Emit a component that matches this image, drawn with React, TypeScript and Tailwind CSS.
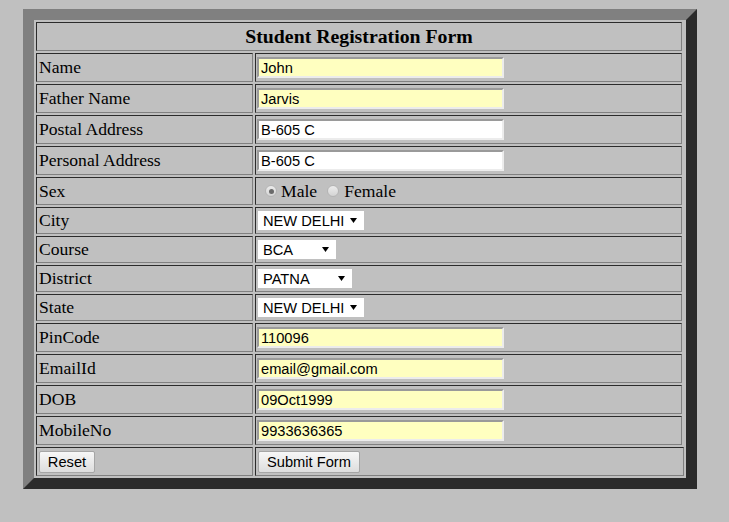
import React from 'react';

const cell =
  'border border-t-[#2b2b2b] border-l-[#2b2b2b] border-b-[#808080] border-r-[#808080] px-[1px] flex items-center';

const inputCls =
  'w-[247px] h-[21px] border-2 border-t-[#9a9a9a] border-l-[#9a9a9a] border-b-[#ececec] border-r-[#ececec] px-[2px] text-[14.67px] text-black outline-none font-["Liberation_Sans",Arial,sans-serif]';

function Arrow() {
  return (
    <svg width="7" height="5" viewBox="0 0 7 5" className="shrink-0">
      <polygon points="0,0 7,0 3.5,5" fill="#000" />
    </svg>
  );
}

function FakeSelect({ value, width }: { value: string; width: string }) {
  return (
    <div
      className={`${width} h-[19px] ml-[1px] bg-white flex items-center justify-between pl-[5px] pr-[7px] text-[14.67px] text-black font-["Liberation_Sans",Arial,sans-serif]`}
    >
      <span>{value}</span>
      <Arrow />
    </div>
  );
}

function Radio({ checked }: { checked?: boolean }) {
  return (
    <span className="w-[12px] h-[12px] rounded-full border border-[#b4b4b4] bg-gradient-to-b from-[#ececec] to-[#d4d4d4] flex items-center justify-center shrink-0">
      {checked && <span className="w-[5px] h-[5px] rounded-full bg-[#6a6a6a]" />}
    </span>
  );
}

type Row = { label: string; h: string; field: React.ReactNode };

export default function App() {
  const rows: Row[] = [
    { label: 'Name', h: 'h-[29px]', field: <input defaultValue="John" className={`${inputCls} bg-[#ffffc0]`} /> },
    { label: 'Father Name', h: 'h-[29px]', field: <input defaultValue="Jarvis" className={`${inputCls} bg-[#ffffc0]`} /> },
    { label: 'Postal Address', h: 'h-[29px]', field: <input defaultValue="B-605 C" className={`${inputCls} bg-white`} /> },
    { label: 'Personal Address', h: 'h-[29px]', field: <input defaultValue="B-605 C" className={`${inputCls} bg-white`} /> },
    {
      label: 'Sex',
      h: 'h-[28px]',
      field: (
        <div className="flex items-center ml-[8px] text-[17.6px]">
          <Radio checked />
          <span className="ml-[4px]">Male</span>
          <span className="ml-[10px]">
            <Radio />
          </span>
          <span className="ml-[5px]">Female</span>
        </div>
      ),
    },
    { label: 'City', h: 'h-[27px]', field: <FakeSelect value="NEW DELHI" width="w-[106px]" /> },
    { label: 'Course', h: 'h-[27px]', field: <FakeSelect value="BCA" width="w-[78px]" /> },
    { label: 'District', h: 'h-[27px]', field: <FakeSelect value="PATNA" width="w-[94px]" /> },
    { label: 'State', h: 'h-[27px]', field: <FakeSelect value="NEW DELHI" width="w-[106px]" /> },
    { label: 'PinCode', h: 'h-[29px]', field: <input defaultValue="110096" className={`${inputCls} bg-[#ffffc0]`} /> },
    { label: 'EmailId', h: 'h-[29px]', field: <input defaultValue="email@gmail.com" className={`${inputCls} bg-[#ffffc0]`} /> },
    { label: 'DOB', h: 'h-[29px]', field: <input defaultValue="09Oct1999" className={`${inputCls} bg-[#ffffc0]`} /> },
    { label: 'MobileNo', h: 'h-[29px]', field: <input defaultValue="9933636365" className={`${inputCls} bg-[#ffffc0]`} /> },
  ];

  const btn =
    'h-[22px] border border-[#a6a6a6] rounded-[2px] bg-gradient-to-b from-[#f7f7f7] to-[#dddddd] text-[14.67px] text-black font-["Liberation_Sans",Arial,sans-serif] flex items-center justify-center';

  return (
    <div className='min-h-screen bg-[#c0c0c0] pt-[9px] pl-[23px] text-black font-["Liberation_Serif","Times_New_Roman",serif]'>
      <div className="w-[674px] border-[11px] border-t-[#808080] border-l-[#808080] border-b-[#2b2b2b] border-r-[#2b2b2b] pl-[2px] pr-[4px] py-[2px] flex flex-col gap-[2px]">
        <div className={`${cell} h-[29px] justify-center`}>
          <span className="text-[19.8px] font-bold">Student Registration Form</span>
        </div>

        {rows.map((r) => (
          <div key={r.label} className={`flex gap-[2px] ${r.h}`}>
            <div className={`${cell} w-[217px] pl-[2px] text-[17.6px]`}>{r.label}</div>
            <div className={`${cell} flex-1`}>{r.field}</div>
          </div>
        ))}

        <div className="flex gap-[2px] h-[29px] mr-[-2px]">
          <div className={`${cell} w-[217px] pl-[2px]`}>
            <button className={`${btn} w-[56px]`}>Reset</button>
          </div>
          <div className={`${cell} flex-1`}>
            <button className={`${btn} ml-[1px] w-[102px]`}>Submit Form</button>
          </div>
        </div>
      </div>
    </div>
  );
}
